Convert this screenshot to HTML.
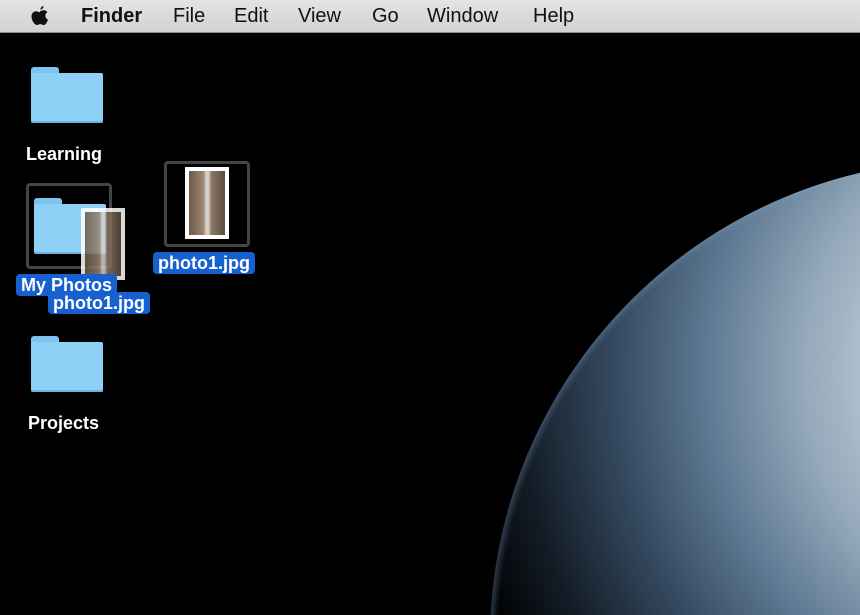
<!DOCTYPE html>
<html><head><style>
html,body{margin:0;width:860px;height:615px;overflow:hidden;background:#000}
#w{position:relative;width:860px;height:615px;overflow:hidden;background:#000;font-family:"Liberation Sans",sans-serif}
.menu{position:absolute;left:0;top:0;width:860px;height:32px;background:linear-gradient(#e4e4e4,#d2d2d2);border-bottom:1px solid #888;font-size:20px;color:#111}
.menu span{position:absolute;top:5px}
.earth{position:absolute;left:490px;top:160px;width:960px;height:960px;border-radius:50%;
background:radial-gradient(circle farthest-corner at 60% 22%,#eef2f5 0%,#c6d2dc 16%,#93a8ba 28%,#5f7a94 38%,#34495f 48%,#131c26 58%,#000 66%);
box-shadow:inset 4px 0 6px rgba(140,180,220,.3)}
.folder{position:absolute;width:72px;height:56px}
.folder:before{content:"";position:absolute;left:0;top:0;width:28px;height:12px;background:#7cc4ee;border-radius:3px 3px 0 0}
.folder:after{content:"";position:absolute;left:0;top:6px;width:72px;height:50px;background:#8ed0f6;border-radius:2px;box-shadow:inset 0 -2px 0 #6bb3dd}
.lbl{position:absolute;color:#fff;font-weight:bold;font-size:18px}
.sel{position:absolute;background:#1660cf;color:#fff;font-weight:bold;font-size:18px;border-radius:4px;padding:0 5px;line-height:22px}
.photo{position:absolute;background:#fff}
.photo i{position:absolute;left:4px;top:4px;right:4px;bottom:4px;background:linear-gradient(90deg,#6d5a48,#9a8670 40%,#d8d4cc 48%,#d0ccc6 55%,#8b7866 62%,#5c4c3c)}
.box{position:absolute;border:3px solid #444;border-radius:4px}
</style></head><body><div id="w">
<div class="earth"></div>
<div class="menu">
<svg style="position:absolute;left:30px;top:5px" width="20" height="22" viewBox="0 0 20 22"><path d="M13.5 1c.2 1.6-1.3 3.6-3 3.6-.2-1.5 1.3-3.4 3-3.6zM10 6.2c1 0 2.3-1 3.8-.9 1.4.1 2.8.7 3.6 2-3 1.8-2.5 6.2.6 7.4-.7 2-2.3 5.3-4.2 5.3-1.4 0-1.9-.9-3.5-.9s-2.2.9-3.5.9C4.7 20 1.5 15.5 1.5 11.5c0-3.5 2.3-5.3 4.5-5.3 1.5 0 2.8 1 4 1z" fill="#111"/></svg>
<span style="left:81px;font-weight:bold">Finder</span>
<span style="left:173px">File</span>
<span style="left:234px">Edit</span>
<span style="left:298px">View</span>
<span style="left:372px">Go</span>
<span style="left:427px">Window</span>
<span style="left:533px">Help</span>
</div>
<div class="folder" style="left:31px;top:67px"></div>
<div class="lbl" style="left:26px;top:144px">Learning</div>
<div class="box" style="left:26px;top:183px;width:80px;height:80px"></div>
<div class="folder" style="left:34px;top:198px"></div>
<div class="photo" style="left:81px;top:208px;width:44px;height:72px;opacity:.85"><i></i></div>
<div class="box" style="left:164px;top:161px;width:80px;height:80px"></div>
<div class="photo" style="left:185px;top:167px;width:44px;height:72px"><i></i></div>
<div class="sel" style="left:153px;top:252px">photo1.jpg</div>
<div class="sel" style="left:16px;top:274px">My Photos</div>
<div class="sel" style="left:48px;top:292px">photo1.jpg</div>
<div class="folder" style="left:31px;top:336px"></div>
<div class="lbl" style="left:28px;top:413px">Projects</div>
</div></body></html>
